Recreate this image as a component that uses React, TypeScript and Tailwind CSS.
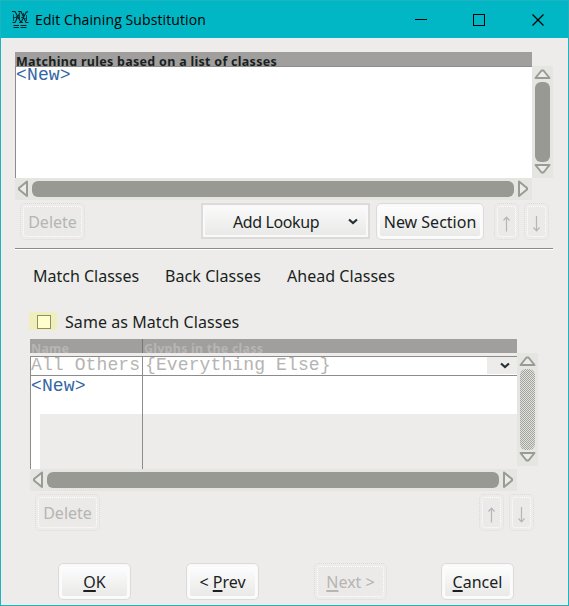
import React from "react";

const UI = "font-['Noto_Sans','Liberation_Sans',sans-serif]";
const MONO = "font-['Liberation_Mono',monospace]";

function Tri({ dir, className = "" }: { dir: "up" | "down" | "left" | "right"; className?: string }) {
  const vertical = dir === "up" || dir === "down";
  const d = {
    up: "M1.5 9L7.500 1.500H9.500L15.500 9Z",
    down: "M1.500 1H15.500L9.500 8.500H7.500Z",
    left: "M9 1.500V16L1 9.500V8Z",
    right: "M1 1.500V16L9 9.500V8Z",
  }[dir];
  return (
    <svg width={vertical ? 17 : 10} height={vertical ? 10 : 18} className={`block shrink-0 overflow-visible ${className}`}>
      <path d={d} fill="#ebebe9" stroke="#9a9a96" strokeWidth="2" strokeLinejoin="round" />
    </svg>
  );
}

function VScroll({ disabled = false }: { disabled?: boolean }) {
  return (
    <div className={`flex w-[21px] shrink-0 flex-col items-start bg-[#e5e5e2] pt-[3px] pl-[2px] ${disabled ? "h-[113px]" : "h-[112px]"}`}>
      <Tri dir="up" />
      <div
        className={`mt-[3px] ml-px w-[15px] shrink-0 rounded-[6px] ${
          disabled
            ? "h-[81px] bg-[repeating-conic-gradient(#a2a29e_0_25%,#e1e1dd_0_50%)] bg-[length:2px_2px]"
            : "h-[80px] bg-[#999994]"
        }`}
      />
      <Tri dir="down" className="mt-[2px]" />
    </div>
  );
}

function HScroll() {
  return (
    <div className="flex h-[22px] items-start bg-[#e5e5e2] pr-[4px] pl-[3px] pt-[2px]">
      <Tri dir="left" />
      <div className="mx-1 mt-px h-4 flex-1 rounded-[6px] bg-[#999994]" />
      <Tri dir="right" />
    </div>
  );
}

function Button({ children, disabled = false, className = "" }: { children: React.ReactNode; disabled?: boolean; className?: string }) {
  return (
    <div
      className={`h-[37px] shrink-0 rounded-[5px] p-px ${
        disabled ? "border border-dotted border-[#dcdbd9] text-[#b5b5b3]" : "border border-[#dcdbd9] bg-[#f9f9f9] text-[#1a1f22]"
      } ${className}`}
    >
      <div
        className={`flex items-center justify-center whitespace-pre rounded-[4px] ${
          disabled
            ? "m-px h-[31px] border border-dotted border-white bg-[#ebeae8]"
            : "h-full border-2 border-[#fbfbfb] bg-linear-to-b from-[#fdfdfd] to-[#e9e9e8]"
        }`}
      >
        {children}
      </div>
    </div>
  );
}

function Arrow({ down = false }: { down?: boolean }) {
  return (
    <svg width="9" height="16" className="mt-[5px] block shrink-0" fill="none" stroke="#b4b4bc">
      <path d={down ? "M4.500 0V15M1.500 11.500L4.500 14.800L7.500 11.500" : "M4.500 15.500V1M1.500 4.500L4.500 1.200L7.500 4.500"} strokeWidth="1.2" />
    </svg>
  );
}

function Chevron({ className = "" }: { className?: string }) {
  return (
    <svg width="10" height="7" className={`shrink-0 ${className}`}>
      <path d="M1 1.500L5 5L9 1.500" fill="none" stroke="#263036" strokeWidth="2.2" />
    </svg>
  );
}

function Logo() {
  return (
    <svg width="18" height="19" className="ml-[10px] shrink-0" fill="none" stroke="#062126">
      <path d="M1 1.500H4L10 12.500H12M7 1.500H10L15 12.500H17.500M1.500 12.500H4L9 2.500M8 12.500H10L15 2.500L17 1.500" strokeWidth="1.1" />
      <path d="M2.500 4.500V11M5.500 6V10M2 7.500H5M8.500 5V10M12.500 3V8M15.500 5V11M10 7.500H12M14 8.500H16" strokeWidth="0.8" />
      <path d="M2.500 15.500H8M9.500 15.500H15.500M2.500 17.500H8M9.500 17.500H15.500" strokeWidth="1" />
    </svg>
  );
}

const key = "underline decoration-2 underline-offset-2";

export default function App() {
  return (
    <div className={`flex h-[606px] w-[569px] flex-col overflow-hidden border border-[#1cb4bf] bg-[#edecea] text-[16px] leading-5 text-[#1a1f22] ${UI}`}>
      <header className="flex h-[37px] shrink-0 items-center bg-[#02b7c5] text-black">
        <Logo />
        <span className="ml-[6px] whitespace-nowrap font-['Open_Sans',sans-serif] text-[14px] tracking-[0.1px]">Edit Chaining Substitution</span>
        <svg width="156" height="14" className="mr-[24px] ml-auto shrink-0" fill="none" stroke="#000" shapeRendering="crispEdges">
          <path d="M27 6.500H39M85.500 1.500H96.500V12.500H85.500Z" />
          <path d="M144.500 1.500L155.500 12.500M155.500 1.500L144.500 12.500" shapeRendering="auto" strokeWidth="1.2" />
        </svg>
      </header>

      <section className="mt-[14px] ml-[14px] w-[538px] shrink-0">
        <div className="h-[14px] w-[517px] overflow-hidden whitespace-nowrap bg-[#a09f9d] pl-px text-[12.5px] font-bold leading-[19px] tracking-[0.29px]">Matching rules based on a list of classes</div>
        <div className="flex">
          <div className={`h-[112px] w-[517px] overflow-hidden border-t border-l border-[#8c8c8c] bg-white text-[18px] leading-[17px] tracking-[0.15px] text-[#3465a4] ${MONO}`}>
            &lt;New&gt;
          </div>
          <VScroll />
        </div>
        <div className="w-[517px]"><HScroll /></div>
        <div className="mt-[3px] flex h-[37px] pl-[5px]">
          <Button disabled className="w-[65px]">Delete</Button>
          <div className="ml-[116px] flex h-[36px] w-[169px] items-center border-2 border-[#dcdbd9] bg-[#f9f9f9] p-[2px]">
            <div className="flex h-full w-full items-center bg-linear-to-b from-[#fafafa] to-[#e9e9e8] pl-[28px]">
              <span className="w-[86px] whitespace-nowrap pt-[2px] tracking-[-0.4px]">Add Lookup</span>
              <Chevron className="ml-[29px]" />
            </div>
          </div>
          <Button className="ml-[6px] w-[108px]">New Section</Button>
          <Button disabled className="ml-[10px] w-[25px]"><Arrow /></Button>
          <Button disabled className="ml-[5px] w-[25px]"><Arrow down /></Button>
        </div>
        <div className="mt-[8px] h-[2px] border-t border-[#8c8c8c] bg-white" />
      </section>

      <nav className="mt-[16px] ml-[32px] flex h-5 shrink-0 whitespace-nowrap">
        <span className="w-[132px]">Match Classes</span>
        <span className="w-[122px] tracking-[0.08px]">Back Classes</span>
        <span className="tracking-[0.04px]">Ahead Classes</span>
      </nav>

      <label className="mt-[26px] ml-[28px] flex h-[18px] shrink-0 items-center">
        <span className="flex h-[18px] w-[28px] items-center justify-center bg-[#f0eebc] pt-px pl-[2px]">
          <span className="h-[14px] w-[14px] border border-[#8e8e68] bg-[#ffffcc]" />
        </span>
        <span className="ml-[8px] whitespace-nowrap pt-[2px] tracking-[0.06px]">Same as Match Classes</span>
      </label>

      <section className="mt-[9px] ml-[29px] w-[508px] shrink-0">
        <div className="flex">
          <div className="h-[130px] w-[487px]">
            <div className="flex h-[14px] overflow-hidden whitespace-nowrap bg-[#a09f9d] text-[12.5px] font-bold leading-[19px] tracking-[0.22px] text-[#b7b6b4]">
              <span className="w-[112px] pl-px">Name</span>
              <span className="border-l border-[#777] pl-px">Glyphs in the class</span>
            </div>
            <div className="h-[3px]" />
            <div className={`grid h-[113px] grid-cols-[112px_375px] grid-rows-[19px_38px_55px] border-t border-[#8c8c8c] text-[18px] tracking-[0.12px] ${MONO}`}>
              <div className="overflow-hidden border-b border-l border-[#8c8c8c] bg-white leading-[17px] text-[#b5b4b2]">All Others</div>
              <div className="flex border-b border-l border-[#8c8c8c] bg-white leading-[17px] text-[#b5b4b2]">
                <span className="pl-[2px]">{"{Everything Else}"}</span>
                <span className="mb-px ml-auto flex w-[30px] items-center justify-center bg-[#edecea] pl-[5px]"><Chevron /></span>
              </div>
              <div className="border-l border-[#8c8c8c] bg-white leading-[20px] text-[#3465a4]">&lt;New&gt;</div>
              <div className="border-l border-[#8c8c8c] bg-white" />
              <div className="border-l border-[#8c8c8c] bg-white pl-[9px]"><div className="h-full bg-[#edecea]" /></div>
              <div className="border-l border-[#8c8c8c]" />
            </div>
          </div>
          <div className="pt-[14px]"><VScroll disabled /></div>
        </div>
        <div className="w-[487px]"><HScroll /></div>
        <div className="mt-[3px] flex pl-[5px]">
          <Button disabled className="w-[65px]">Delete</Button>
          <Button disabled className="ml-[379px] w-[25px]"><Arrow /></Button>
          <Button disabled className="ml-[5px] w-[25px]"><Arrow down /></Button>
        </div>
      </section>

      <footer className="mt-[32px] ml-[57px] flex shrink-0">
        <Button className="w-[73px]"><span className={key}>O</span>K</Button>
        <Button className="ml-[55px] w-[73px]">&lt; <span className={key}>P</span>rev</Button>
        <Button disabled className="ml-[55px] w-[73px]"><span className={key}>N</span>ext &gt;</Button>
        <Button className="ml-[54px] w-[73px]"><span className={key}>C</span>ancel</Button>
      </footer>
    </div>
  );
}
